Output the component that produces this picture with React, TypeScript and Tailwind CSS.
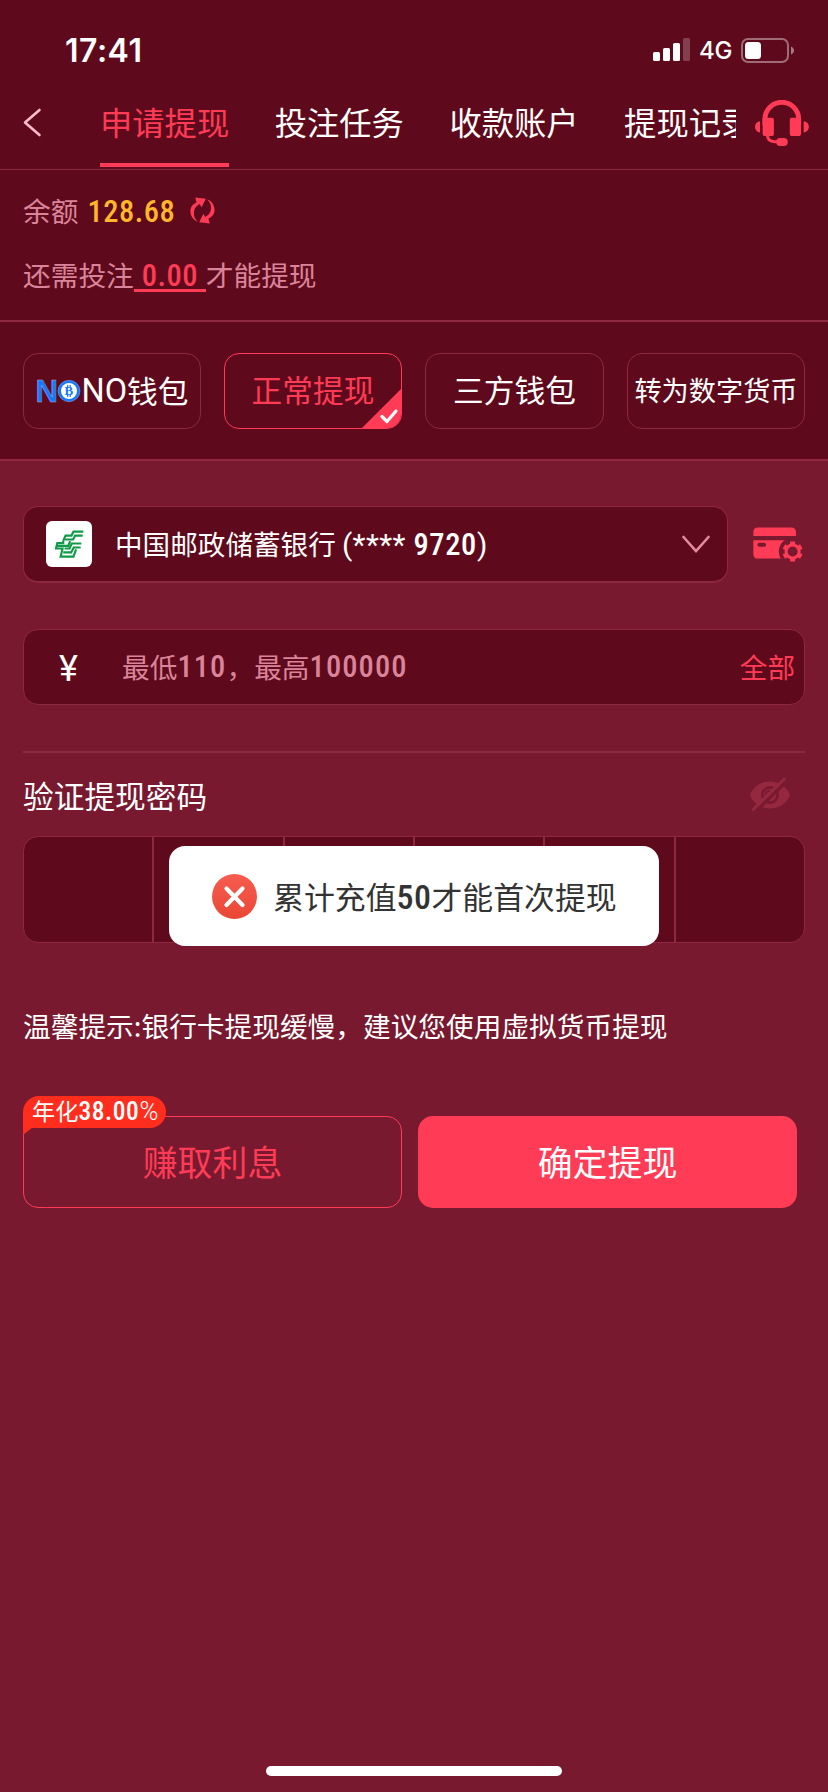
import type { ReactNode } from 'react';

const cjk = "font-['Noto_Sans_CJK_SC',sans-serif]";

function Num({ children, className = '' }: { children: ReactNode; className?: string }) {
  return (
    <span className={`font-['Roboto',sans-serif] font-[470] [font-stretch:86%] ${className}`}>
      {children}
    </span>
  );
}

function StatusBar() {
  return (
    <div className="flex h-[88px] items-start justify-between pl-[65px] pr-[34px]">
      <div className="mt-[31px] font-['Inter',sans-serif] text-[32px] font-semibold leading-[40px] tracking-[0.500px]">17:41</div>
      <div className="mt-[30px] flex h-10 items-center">
        <svg className="mt-[-1px] h-[23px] w-[37px]" viewBox="0 0 37 23" fill="#fff">
          <rect x="0" y="14" width="7" height="9" rx="1.5" />
          <rect x="10" y="10" width="7" height="13" rx="1.5" />
          <rect x="20" y="5" width="7" height="18" rx="1.5" />
          <rect x="30" y="0" width="7" height="23" rx="1.5" opacity=".22" />
        </svg>
        <span className="ml-[9px] w-[33px] pt-[2px] font-['Inter',sans-serif] text-[24px] font-medium leading-10 tracking-[-0.3px]">4G</span>
        <svg className="ml-[9px] h-[25px] w-[53px]" viewBox="0 0 53 25">
          <rect x="1" y="1" width="46" height="23" rx="6" fill="none" stroke="#fff" strokeOpacity=".4" strokeWidth="2" />
          <rect x="4" y="4" width="16" height="17" rx="3.5" fill="#fff" />
          <path d="M50 8.500c4 1.500 4 6.500 0 8z" fill="#fff" opacity=".45" />
        </svg>
      </div>
    </div>
  );
}

function Headset() {
  return (
    <svg className="h-[46px] w-[54px]" viewBox="1023 299 163 139" fill="#ff3b55">
      <path d="M1053 375v-18a51 51 0 0 1 102 0v18" fill="none" stroke="#ff3b55" strokeWidth="15" />
      <path d="M1046 353h28q6 0 6 6v41q0 8-8 8h-18q-8 0-8-8z" />
      <path d="M1162 353h-28q-6 0-6 6v41q0 8 8 8h18q8 0 8-8z" />
      <path d="M1038 363v34c-20-2-20-32 0-34zM1170 363v34c21-2 21-32 0-34z" />
      <path d="M1060 402q0 23 22 23h12" fill="none" stroke="#ff3b55" strokeWidth="9" />
      <rect x="1087" y="414" width="35" height="24" rx="12" />
    </svg>
  );
}

function TabBar() {
  return (
    <div className="flex h-[82px] items-stretch border-b border-[#8d2840] pl-[23px]">
      <div className="flex w-[77px] items-center">
        <svg className="mt-[-12px] h-[29px] w-[19px]" viewBox="0 0 19 29" fill="none" stroke="#ffbccb" strokeWidth="2.600" strokeLinecap="round" strokeLinejoin="round">
          <path d="M16.500 2 2 14.500l14.500 12.500" />
        </svg>
      </div>
      <div className="flex w-[636px] gap-[45.500px] overflow-hidden whitespace-nowrap text-[32.300px] leading-[67px]">
        <div className="h-[79px] shrink-0 border-b-4 border-[#ff3b55] text-[#ff3b55]">申请提现</div>
        <div className="shrink-0">投注任务</div>
        <div className="shrink-0">收款账户</div>
        <div className="shrink-0">提现记录</div>
      </div>
      <div className="ml-[19px] mt-[12px]"><Headset /></div>
    </div>
  );
}

function Refresh() {
  const half = 'M592 157C564 146 561 108 588 98L584 83L616 87L603 113L598 103C575 113 575 142 592 157Z';
  return (
    <svg className="ml-[17px] h-[27px] w-[25px]" viewBox="568 82 76 81" fill="#ff3b55">
      <path d={half} />
      <path d={half} transform="rotate(180 606 122.500)" />
    </svg>
  );
}

function Balance() {
  return (
    <div className="h-[152px] border-b-2 border-[#8d2840] px-[23px] text-[27.700px] text-[#d9849a]">
      <div className="flex h-[80px] items-center leading-[40px]">
        <span>余额</span>
        <Num className="ml-[9px] mt-[3px] w-[86px] text-[30.500px] tracking-[0.500px] text-[#ffb72b]">128.68</Num>
        <Refresh />
      </div>
      <div className="mt-[4px] flex h-10 items-center leading-10">
        <span>还需投注</span>
        <span className="mt-[3px] flex h-[32px] w-[72px] items-center justify-center border-b-[3.500px] border-[#ff3b55]">
          <Num className="mt-[3px] text-[30.500px] tracking-[0.500px] text-[#ff3b55]">0.00</Num>
        </span>
        <span>才能提现</span>
      </div>
    </div>
  );
}

function CoinLogo() {
  return (
    <svg className="ml-[-2px] h-[26px] w-[48px]" viewBox="-3 -1 48 26">
      <text x="-1.500" y="22.500" fontFamily="Liberation Sans" fontWeight="700" fontSize="31" fill="#1677ff" stroke="#fff" strokeOpacity=".5" strokeWidth=".5">N</text>
      <ellipse cx="32" cy="12" rx="11" ry="10.700" fill="#1677ff" stroke="#fff" strokeOpacity=".5" strokeWidth=".5" />
      <circle cx="32" cy="12" r="8" fill="#fff" />
      <text x="27.500" y="16.300" fontFamily="Liberation Serif" fontWeight="700" fontSize="13" fill="#1677ff">B</text>
      <path d="M30.700 6v2.500M33.200 6v2.500M30.700 15.500V18M33.200 15.500V18" stroke="#1677ff" strokeWidth="1.200" />
    </svg>
  );
}

function Methods() {
  const box = 'flex h-[76px] items-center justify-center rounded-[15px] border border-[#8d2840] whitespace-nowrap';
  return (
    <div className="grid h-[139px] grid-cols-[178px_178px_179px_178px] gap-x-[23px] border-b-2 border-[#8d2840] px-[23px] pt-[31px] text-[30.700px] leading-[44px]">
      <div className={box}>
        <CoinLogo />
        <span className="font-['Roboto',sans-serif] text-[32.500px] font-[370] [font-stretch:90%]">NO</span>
        <span className="mt-[-3px]">钱包</span>
      </div>
      <div className="relative flex h-[76px] items-center justify-center overflow-hidden rounded-[15px] border border-[#ff3b55] text-[#ff3b55]">
        <span className="mt-[-4px]">正常提现</span>
        <svg className="absolute bottom-[-1px] right-[-1px] h-[41px] w-[41px]" viewBox="0 0 41 41">
          <path d="M41 0v41H0z" fill="#ff3b55" />
          <path d="M21 28.500l5 5 9-10.500" fill="none" stroke="#fff" strokeWidth="3.200" strokeLinecap="round" strokeLinejoin="round" />
        </svg>
      </div>
      <div className={box}><span className="mt-[-4px]">三方钱包</span></div>
      <div className={`${box} text-[27.200px]`}><span className="mt-[-4px]">转为数字货币</span></div>
    </div>
  );
}

function PostalBank() {
  return (
    <span className="flex size-[46px] items-center justify-center rounded-[6px] bg-white">
      <svg className="h-[28px] w-[29px]" viewBox="165 122 88 85" fill="none" stroke="#0f9a48" strokeWidth="6.500">
        <path d="M251 127H221L215 139H197L190 155" />
        <path d="M249 139H226L220 151H195" />
        <path d="M190 155V162H172L168 178H188L182 203H221L229 181" />
        <path d="M245 163H216L209 178H194M243 175H222L214 190H190M168 170H205L211 156" />
      </svg>
    </span>
  );
}

function CardGear() {
  return (
    <svg className="h-[35px] w-[50px]" viewBox="1018 110 149 104">
      <path d="M1019 149h127v55h-113q-14 0-14-14z" fill="#ff3b55" />
      <rect x="1031" y="157" width="26" height="12" rx="6" fill="#78192f" />
      <circle cx="1136" cy="183" r="41" fill="#78192f" />
      <path d="M1019 137v-12q0-14 14-14h99q14 0 14 14v12z" fill="#ff3b55" />
      <circle cx="1136" cy="183" r="19.500" fill="none" stroke="#ff3b55" strokeWidth="9" />
      <g stroke="#ff3b55" strokeWidth="15">
        <path d="M1136 153v10M1136 203v10" />
        <path d="M1136 153v10M1136 203v10" transform="rotate(60 1136 183)" />
        <path d="M1136 153v10M1136 203v10" transform="rotate(120 1136 183)" />
      </g>
    </svg>
  );
}

function HiddenEye() {
  return (
    <svg className="mt-[-2px] h-[34px] w-[42px]" viewBox="1006 142 124 102">
      <path d="M1008 196C1028 142 1108 142 1128 196C1108 250 1028 250 1008 196Z" fill="#93283f" />
      <circle cx="1068" cy="196" r="23" fill="none" stroke="#78192f" strokeWidth="8" />
      <path d="M1068 183a13 13 0 0 0-13 13" fill="none" stroke="#78192f" strokeWidth="6" />
      <path d="M1022 248L1121 152" stroke="#78192f" strokeWidth="10" />
      <path d="M1018 239L1111 148" stroke="#93283f" strokeWidth="9" strokeLinecap="round" />
    </svg>
  );
}

function Toast() {
  return (
    <div className="absolute left-[146px] top-[10px] flex h-[100px] w-[490px] items-center rounded-[16px] bg-white pl-[43px] text-[30.900px] leading-[44px] whitespace-nowrap text-[#333]">
      <svg className="mr-[16px] mt-[1px] size-[45px]" viewBox="0 0 45 45">
        <defs>
          <linearGradient id="alert" x1="0" y1="0" x2="0" y2="1">
            <stop offset="0" stopColor="#f65c50" />
            <stop offset="1" stopColor="#ea4735" />
          </linearGradient>
        </defs>
        <circle cx="22.500" cy="22.500" r="22.500" fill="url(#alert)" />
        <path d="M14.500 14.500l16 16.500M30.500 14.500L14.500 31" stroke="#fff" strokeWidth="4.200" strokeLinecap="round" />
      </svg>
      <span>累计充值</span>
      <Num className="mt-[2px] text-[34px] tracking-[0.400px]">50</Num>
      <span>才能首次提现</span>
    </div>
  );
}

export default function App() {
  return (
    <div className={`flex h-[1792px] w-[828px] flex-col bg-[#78192f] text-white ${cjk}`}>
      <header className="bg-[#5f0a1c]">
        <StatusBar />
        <TabBar />
        <Balance />
        <Methods />
      </header>
      <main className="flex flex-1 flex-col px-[23px] pt-[45px] text-[27.600px] leading-[40px]">
        <div className="flex items-center">
          <div className="flex h-[77px] w-[705px] items-center rounded-[15px] border border-b-2 border-[#8d2840] bg-[#5f0a1c] pl-[22px] pr-[17px] whitespace-nowrap">
            <PostalBank />
            <span className="ml-[23px] flex-1">
              中国邮政储蓄银行{' '}
              <span className="font-['Roboto',sans-serif] text-[30px] tracking-[0.400px]">(****</span>
              <Num className="text-[30.500px] tracking-[0.600px]"> 9720</Num>
              <span className="font-['Roboto',sans-serif] text-[30px]">)</span>
            </span>
            <svg className="h-[18px] w-[28px]" viewBox="0 0 28 18" fill="none" stroke="#e58ba1" strokeWidth="2.600" strokeLinecap="round">
              <path d="M1.500 2 14 16 26.500 2" />
            </svg>
          </div>
          <div className="ml-[25px]"><CardGear /></div>
        </div>
        <div className="mt-[46px] flex h-[76px] items-center rounded-[15px] border border-[#8d2840] bg-[#5f0a1c] pl-[35px] pr-[9px]">
          <span className="mt-[3px] w-[63px] font-['Roboto',sans-serif] text-[36px]">¥</span>
          <span className="mt-[-2px] flex flex-1 items-center text-[27.700px] text-[#d9849a]">
            <span>最低</span><Num className="mt-[2px] text-[30.500px] tracking-[1.100px]">110</Num><span>，最高</span><Num className="mt-[2px] text-[30.500px] tracking-[1.100px]">100000</Num>
          </span>
          <span className="mt-[-2px] text-[#ff3b55]">全部</span>
        </div>
        <div className="mt-[46px] flex h-[85px] items-center justify-between border-t-2 border-[#8d2840] pr-[14px]">
          <span className="mt-[1px] text-[30.700px]">验证提现密码</span>
          <HiddenEye />
        </div>
        <div className="relative">
          <div className="grid h-[107px] grid-cols-[130px_131px_130px_130px_131px_128px] divide-x-2 divide-[#8d2840] overflow-hidden rounded-[15px] border border-[#8d2840] bg-[#5f0a1c]">
            <div /><div /><div /><div /><div /><div />
          </div>
          <Toast />
        </div>
        <div className="mt-[62px] h-[40px] whitespace-nowrap text-[27.700px]">温馨提示:银行卡提现缓慢，建议您使用虚拟货币提现</div>
        <div className="mt-[71px] flex gap-[16px] text-[34.900px] leading-[50px]">
          <div className="relative flex h-[92px] w-[379px] items-center justify-center rounded-[15px] border border-[#ff3b55] text-[#ff3b55]">
            <span className="mt-[-2px]">赚取利息</span>
            <div className="absolute left-[-1px] top-[-21px] flex h-[32px] w-[143px] items-center rounded-[16px] rounded-bl-none bg-[#ff2d1e] pl-[9px] text-[23.200px] leading-[32px] text-white">
              <span className="mt-[-5px]">年化</span>
              <Num className="mt-[-3px] text-[25.500px] tracking-[0.600px]">38.00<span className="font-light [font-stretch:100%]">%</span></Num>
              <svg className="absolute left-0 top-[31px] h-[8px] w-[10px]" viewBox="0 0 10 8"><path d="M0 0h10L0 8z" fill="#ff2d1e" /></svg>
            </div>
          </div>
          <div className="flex h-[92px] w-[379px] items-center justify-center rounded-[15px] bg-[#ff3b55]"><span className="mt-[-2px]">确定提现</span></div>
        </div>
        <div className="mb-[16px] mt-auto h-[10px] w-[296px] self-center rounded-full bg-white" />
      </main>
    </div>
  );
}
